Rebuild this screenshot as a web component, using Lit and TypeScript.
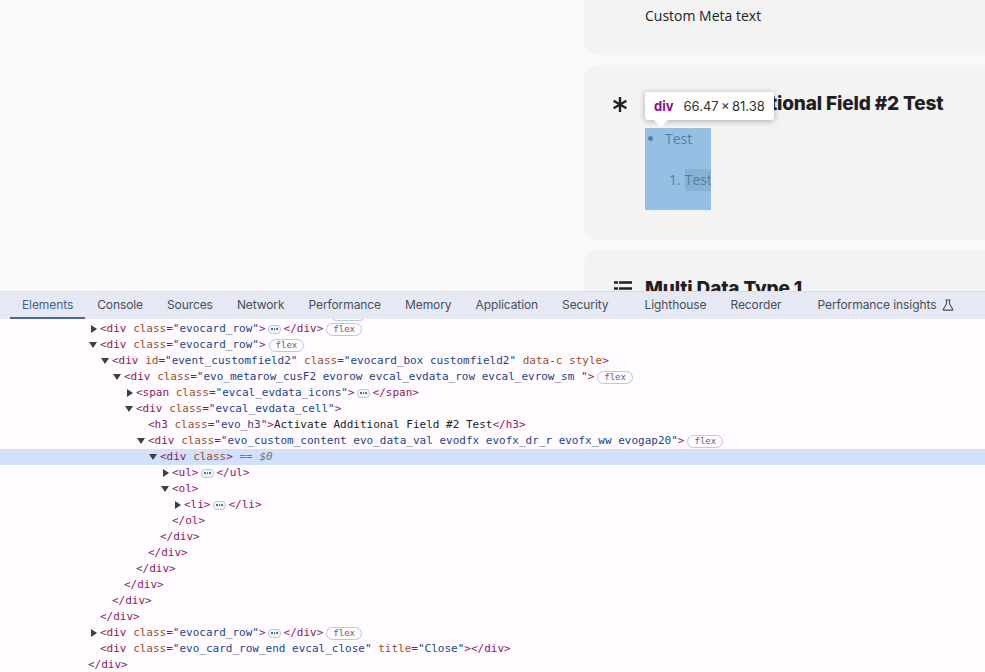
import { LitElement, html, css, nothing } from "lit";
import { customElement } from "lit/decorators.js";

const tag = (s: string) => html`<span class="tag">${s}</span>`;
const attr = (name: string, value?: string) => html`<span class="name"> ${name}</span>${value === undefined
    ? nothing
    : html`<span class="val">="${value}"</span>`}`;
const dots = html`<span class="dots"><i></i><i></i><i></i></span>`;
const flex = html`<span class="pill">flex</span>`;

// level = indent step, open: true/false = arrow, undefined = no arrow
const rows: { level: number; open?: boolean; selected?: boolean; body: unknown }[] = [
    { level: 1, open: false, body: html`${tag("<div")}${attr("class", "evocard_row")}${tag(">")}${dots}${tag("</div>")}${flex}` },
    { level: 1, open: true, body: html`${tag("<div")}${attr("class", "evocard_row")}${tag(">")}${flex}` },
    { level: 2, open: true, body: html`${tag("<div")}${attr("id", "event_customfield2")}${attr("class", "evocard_box customfield2")}${attr("data-c")}${attr("style")}${tag(">")}` },
    { level: 3, open: true, body: html`${tag("<div")}${attr("class", "evo_metarow_cusF2 evorow evcal_evdata_row evcal_evrow_sm ")}${tag(">")}${flex}` },
    { level: 4, open: false, body: html`${tag("<span")}${attr("class", "evcal_evdata_icons")}${tag(">")}${dots}${tag("</span>")}` },
    { level: 4, open: true, body: html`${tag("<div")}${attr("class", "evcal_evdata_cell")}${tag(">")}` },
    { level: 5, body: html`${tag("<h3")}${attr("class", "evo_h3")}${tag(">")}<span class="txt">Activate Additional Field #2 Test</span>${tag("</h3>")}` },
    { level: 5, open: true, body: html`${tag("<div")}${attr("class", "evo_custom_content evo_data_val evodfx evofx_dr_r evofx_ww evogap20")}${tag(">")}${flex}` },
    { level: 6, open: true, selected: true, body: html`${tag("<div")}${attr("class")}${tag(">")}<span class="eq"> == <em>$0</em></span>` },
    { level: 7, open: false, body: html`${tag("<ul>")}${dots}${tag("</ul>")}` },
    { level: 7, open: true, body: tag("<ol>") },
    { level: 8, open: false, body: html`${tag("<li>")}${dots}${tag("</li>")}` },
    { level: 7, body: tag("</ol>") },
    { level: 6, body: tag("</div>") },
    { level: 5, body: tag("</div>") },
    { level: 4, body: tag("</div>") },
    { level: 3, body: tag("</div>") },
    { level: 2, body: tag("</div>") },
    { level: 1, body: tag("</div>") },
    { level: 1, open: false, body: html`${tag("<div")}${attr("class", "evocard_row")}${tag(">")}${dots}${tag("</div>")}${flex}` },
    { level: 1, body: html`${tag("<div")}${attr("class", "evo_card_row_end evcal_close")}${attr("title", "Close")}${tag("></div>")}` },
    { level: 0, body: tag("</div>") },
];

const tabs = ["Elements", "Console", "Sources", "Network", "Performance", "Memory", "Application", "Security", "Lighthouse", "Recorder"];

@customElement("app-root")
export class AppRoot extends LitElement {
    static styles = css`
        :host {
            display: block;
            width: 985px;
            height: 672px;
            overflow: hidden;
            background: #fffbff;
        }

        .page {
            height: 291px;
            overflow: hidden;
            background: #f9f9f9;
            padding-left: 584px;
            display: flex;
            flex-direction: column;
            gap: 10px;
            font-family: "Open Sans", sans-serif;
        }

        .card {
            flex: none;
            background: #f3f3f3;
            border-radius: 14px 0 0 14px;
            padding: 26px 0 30px 29px;
            display: flex;
            gap: 12px;
        }

        .card.meta {
            border-radius: 0 0 0 14px;
            height: 55px;
            box-sizing: border-box;
            padding: 5px 0 0 61px;
            font-size: 14px;
            line-height: 22px;
            color: #222;
        }

        .card svg {
            flex: none;
            margin-top: 5px;
        }

        .cell {
            position: relative;
        }

        h3 {
            margin: 0 0 11px;
            font: 800 19px/26px Inter, sans-serif;
            letter-spacing: -0.15px;
            color: #202024;
            white-space: nowrap;
        }

        .box {
            width: 66px;
            height: 82px;
            overflow: hidden;
            background: #96c0e3;
            color: #557fa5;
            font-size: 14px;
            line-height: 22px;
        }

        .box ul,
        .box ol {
            margin: 0;
            list-style: none;
            white-space: nowrap;
        }

        .box ul {
            padding: 0 0 0 20px;
            position: relative;
        }

        .box ul::before {
            content: "";
            position: absolute;
            left: 3px;
            top: 8px;
            width: 5px;
            height: 5px;
            border-radius: 50%;
            background: #557fa5;
        }

        .box ol {
            margin-top: 19px;
            padding-left: 24px;
        }

        .box ol b {
            font-weight: 400;
            display: inline-block;
            background: #88b2d3;
            margin-left: 4px;
            padding-right: 1px;
        }

        .tip {
            position: absolute;
            left: 0;
            top: 1px;
            width: 129px;
            height: 28px;
            box-sizing: border-box;
            padding-left: 9px;
            background: #fff;
            border-radius: 3px;
            box-shadow: 0 1px 6px rgba(0, 0, 0, 0.3);
            display: flex;
            align-items: center;
            gap: 10px;
            font: 13px Inter, sans-serif;
            color: #333;
            white-space: nowrap;
        }

        .tip b {
            color: #881280;
            font-weight: 700;
        }

        .tip::after {
            content: "";
            position: absolute;
            left: 9px;
            top: 28px;
            border: 7px solid transparent;
            border-top-color: #fff;
            border-bottom: 0;
        }

        .bar {
            height: 28px;
            background: #e6e9f3;
            border-top: 1px solid #d9dcec;
            box-sizing: border-box;
            padding-left: 10px;
            display: flex;
            font: 12px Inter, sans-serif;
            letter-spacing: -0.09px;
            color: #474f5c;
            white-space: nowrap;
        }

        .tab {
            padding: 0 12px;
            display: flex;
            align-items: center;
            gap: 6px;
            border-bottom: 2px solid transparent;
        }

        .tab.on {
            color: #3f6293;
            border-bottom-color: #49688f;
        }

        .tab.gap {
            margin-left: 12px;
        }

        .tree {
            height: 353px;
            box-sizing: border-box;
            overflow: hidden;
            padding-top: 2px;
            font: 11px/16px "DejaVu Sans Mono", monospace;
        }

        .row {
            height: 16px;
            display: flex;
            align-items: center;
            position: relative;
            white-space: pre;
        }

        .row.stub {
            height: 14px;
            margin-top: -14px;
            padding-left: 327px;
        }

        .row.sel {
            background: #d3e0fb;
        }

        .arrow {
            position: absolute;
            width: 0;
            height: 0;
            border-style: solid;
        }

        .arrow.closed {
            margin-left: -9px;
            border-width: 4px 0 4px 6px;
            border-color: transparent transparent transparent #3c4043;
        }

        .arrow.opened {
            margin-left: -11px;
            border-width: 6px 4px 0 4px;
            border-color: #3c4043 transparent transparent transparent;
        }

        .tag {
            color: #8a1a5e;
        }

        .name {
            color: #99512a;
        }

        .val {
            color: #1c4587;
        }

        .txt {
            color: #222;
        }

        .eq {
            color: #777;
        }

        .eq em {
            font-style: italic;
        }

        .dots {
            display: inline-flex;
            align-items: center;
            justify-content: center;
            gap: 1px;
            width: 13px;
            height: 9px;
            box-sizing: border-box;
            border: 1px solid #b4c8ea;
            border-radius: 4px;
            background: #eef3fc;
            margin: 0 2.5px;
        }

        .dots i {
            width: 1.5px;
            height: 1.5px;
            border-radius: 50%;
            background: #4a5260;
        }

        .pill {
            display: inline-block;
            font-size: 9px;
            line-height: 11px;
            padding: 0 6px;
            margin-left: 3px;
            color: #5c6470;
            border: 1px solid #b4c8ea;
            border-radius: 7px;
        }
    `;

    render() {
        return html`
            <div class="page">
                <div class="card meta">Custom Meta text</div>
                <div class="card">
                    <svg width="20" height="18" viewBox="0 0 20 18" stroke="#202024" stroke-width="2.4">
                        <path d="M7 1v15M.6 4.800l12.800 7.400M13.400 4.800l-12.800 7.400" />
                    </svg>
                    <div class="cell">
                        <h3>Activate Additional Field #2 Test</h3>
                        <div class="box">
                            <ul><li>Test</li></ul>
                            <ol><li>1.<b>Test</b></li></ol>
                        </div>
                        <div class="tip"><b>div</b><span>66.47\u2009×\u200981.38</span></div>
                    </div>
                </div>
                <div class="card">
                    <svg width="20" height="18" viewBox="0 0 20 18" stroke="#202024" stroke-width="2.4">
                        <path d="M6 1.500H19M6 7.500H19M6 13.500H19M1 1.500h4M1 7.500h4M1 13.500h4" />
                    </svg>
                    <div class="cell"><h3>Multi Data Type 1</h3></div>
                </div>
            </div>
            <div class="bar">
                ${tabs.map((t, i) => html`<div class="tab ${i == 0 ? "on" : ""} ${t == "Lighthouse" ? "gap" : ""}">${t}</div>`)}
                <div class="tab gap">
                    Performance insights
                    <svg width="12" height="12" viewBox="0 0 12 12" fill="none" stroke="#474f5c" stroke-width="1.1">
                        <path d="M3.500 1h5M4.500 1v3.800L1.300 10.300q-.3.800.5.800h8.400q.8 0 .5-.8L7.500 4.800V1" />
                    </svg>
                </div>
            </div>
            <div class="tree">
                <div class="row stub">${flex}</div>
                ${rows.map(
                    (r) => html`<div class="row ${r.selected ? "sel" : ""}" style="padding-left: ${88 + r.level * 12}px">
                        ${r.open === undefined
                            ? nothing
                            : html`<span class="arrow ${r.open ? "opened" : "closed"}"></span>`}${r.body}
                    </div>`
                )}
            </div>
        `;
    }
}
